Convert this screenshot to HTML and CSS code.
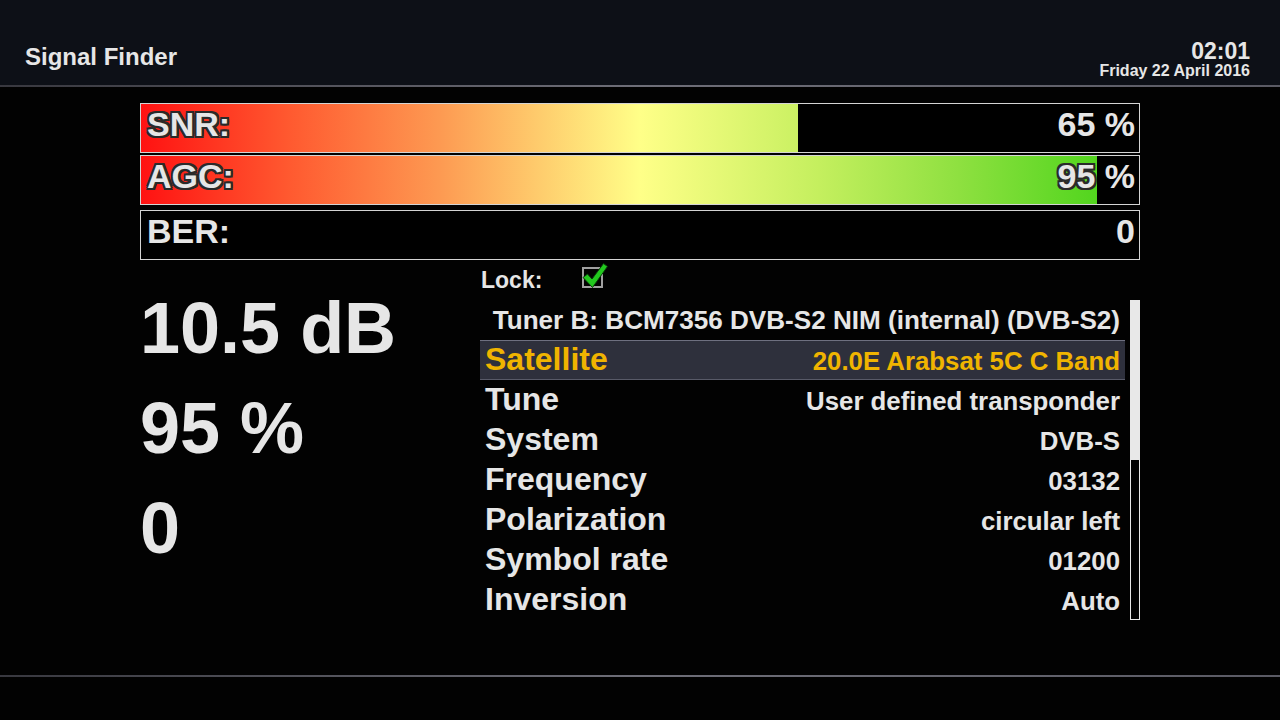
FILE: index.html
```html
<html>
    <head>
        <link rel="stylesheet" href="styles.css">
    </head>
    <body>
        <!--Top bar-->
        <div id="top_bar">
            <div class="screen_title">Signal Finder</div>
            <div class="clock">
                <div class="clock_time">02:01</div>
                <div class="clock_date">Friday 22 April 2016</div>
            </div>
        </div>
        <div class="rule"></div>

        <div id="content">
            <!--Meters: the fill repeats the text with an outline, the plain text shows only where the fill is not-->
            <div class="meter">
                <div class="meter_text"><span class="hidden">SNR:</span><span>65 %</span></div>
                <div class="meter_fill" style="width:65.8%">
                    <div class="meter_text outlined"><span>SNR:</span></div>
                </div>
            </div>
            <div class="meter">
                <div class="meter_text"><span class="hidden">AGC:</span><span><span class="hidden">95</span> %</span></div>
                <div class="meter_fill" style="width:95.8%">
                    <div class="meter_text outlined"><span>AGC:</span><span>95<span class="hidden"> %</span></span></div>
                </div>
            </div>
            <div class="meter meter_last">
                <div class="meter_text"><span>BER:</span><span>0</span></div>
            </div>

            <div id="panel">
                <!--Big readout-->
                <div class="readout">
                    <div>10.5 dB</div>
                    <div>95 %</div>
                    <div>0</div>
                </div>

                <div class="details">
                    <div class="lock_row">
                        <span class="lock_label">Lock:</span>
                        <svg class="lock_box" width="28" height="28" viewBox="0 0 28 28">
                            <rect x="3" y="7" width="19" height="19" fill="none" stroke="#a0a0a0" stroke-width="2"/>
                            <polygon points="3,16.5 7.5,13 12,18 23.5,2.5 27.5,5.5 12.5,26.5" fill="#22c81e" stroke="#0b3a0b" stroke-width="1"/>
                        </svg>
                    </div>

                    <div class="list_wrap">
                        <div class="list">
                            <div class="row tuner_row">Tuner B: BCM7356 DVB-S2 NIM (internal) (DVB-S2)</div>
                            <div class="row selected"><span class="row_key">Satellite</span><span class="row_val">20.0E Arabsat 5C C Band</span></div>
                            <div class="row"><span class="row_key">Tune</span><span class="row_val">User defined transponder</span></div>
                            <div class="row"><span class="row_key">System</span><span class="row_val">DVB-S</span></div>
                            <div class="row"><span class="row_key">Frequency</span><span class="row_val">03132</span></div>
                            <div class="row"><span class="row_key">Polarization</span><span class="row_val">circular left</span></div>
                            <div class="row"><span class="row_key">Symbol rate</span><span class="row_val">01200</span></div>
                            <div class="row"><span class="row_key">Inversion</span><span class="row_val">Auto</span></div>
                        </div>
                        <div class="scrollbar"><div class="scroll_thumb"></div></div>
                    </div>
                </div>
            </div>
        </div>

        <div class="rule"></div>
        <div id="bottom_bar"></div>
    </body>
</html>
```

FILE: styles.css
```css
html,body{
    border:0;
    margin:0;
    padding:0;
}

body{
    width: 1280px;
    height: 720px;
    overflow: hidden;
    background: #020202;
    color: #e6e6e6;
    font-family: "Liberation Sans", Arial, sans-serif;
    font-weight: bold;
    display: flex;
    flex-direction: column;
}

#top_bar{
    height: 85px;
    box-sizing: border-box;
    background: #0d1017;
    display: flex;
    justify-content: space-between;
    align-items: flex-end;
    padding: 0 30px 5px 25px;
}

.screen_title{
    font-size: 24px;
    line-height: 28px;
    margin-bottom: 9px;
}

.clock{
    text-align: right;
}

.clock_time{
    font-size: 23px;
    line-height: 22px;
}

.clock_date{
    font-size: 16px;
    line-height: 18px;
}

.rule{
    height: 2px;
    background: linear-gradient(to right, #38383f, #6e6e78 50%, #5a5a64);
}

#content{
    flex: 1;
    padding: 16px 140px 0 140px;
}

#bottom_bar{
    height: 43px;
}

/* Meters */
.meter{
    position: relative;
    height: 50px;
    box-sizing: border-box;
    border: 1px solid #d4d4d4;
    margin-bottom: 2px;
    background: #000;
}

.meter_last{
    margin-top: 5px;
    margin-bottom: 0;
}

.meter_text{
    display: flex;
    justify-content: space-between;
    font-size: 34px;
    line-height: 40px;
    padding: 0 4px 0 6px;
    white-space: nowrap;
}

.meter_fill{
    position: absolute;
    top: 0;
    left: 0;
    bottom: 0;
    overflow: hidden;
    background: linear-gradient(to right, #ff1212 0%, #ff5a30 15%, #fd9a52 30%, #ffff88 50%, #c4ef5e 68%, #8ee040 82%, #40d214 100%);
    background-size: 998px 100%;
}

.meter_fill .meter_text{
    width: 998px;
    box-sizing: border-box;
}

.hidden{
    visibility: hidden;
}

.outlined{
    text-shadow:
        -2px -2px 0 #2a2a2a, 0 -2px 0 #2a2a2a, 2px -2px 0 #2a2a2a,
        -2px 0 0 #2a2a2a, 2px 0 0 #2a2a2a,
        -2px 2px 0 #2a2a2a, 0 2px 0 #2a2a2a, 2px 2px 0 #2a2a2a;
}

/* Lower panel */
#panel{
    display: grid;
    grid-template-columns: 340px 660px;
}

.readout{
    padding-top: 18px;
    font-size: 72px;
    line-height: 100px;
}

.lock_row{
    height: 40px;
    display: flex;
    align-items: flex-start;
}

.lock_label{
    width: 99px;
    font-size: 23px;
    line-height: 40px;
    padding-left: 1px;
}

.lock_box{
    margin-top: 1px;
}

.list_wrap{
    display: flex;
    gap: 5px;
}

.list{
    width: 645px;
}

.row{
    height: 40px;
    box-sizing: border-box;
    display: flex;
    justify-content: space-between;
    align-items: baseline;
    padding: 0 5px;
    white-space: nowrap;
}

.row_key{
    font-size: 32px;
    line-height: 39px;
}

.row_val{
    font-size: 25.8px;
}

.tuner_row{
    justify-content: flex-end;
    font-size: 26.1px;
    line-height: 40px;
}

.selected{
    background: #2e303c;
    border-top: 1px solid #6e7080;
    border-bottom: 1px solid #585a68;
    color: #f0b400;
}

.selected .row_key{
    line-height: 37px;
}

.scrollbar{
    width: 10px;
    height: 320px;
    box-sizing: border-box;
    border: 1px solid #e8e8e8;
}

.scroll_thumb{
    height: 159px;
    background: #e8e8e8;
}
```
